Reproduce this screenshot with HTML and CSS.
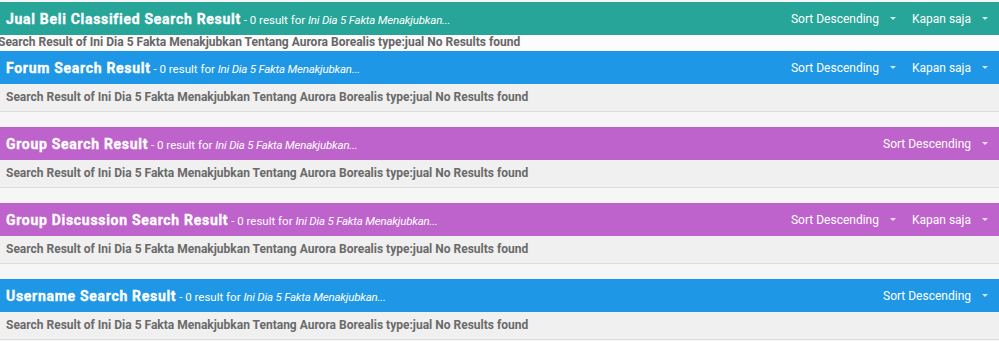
FILE: index.html
```html
<!doctype html>
<html lang="id">
  <head>
    <title>Search Result</title>
    <link rel="stylesheet" href="styles.css">
  </head>
  <body>

    <div class="section first">
      <div class="head teal">
        <div class="title"><b>Jual Beli Classified Search Result</b> - 0 result for <i>Ini Dia 5 Fakta Menakjubkan...</i></div>
        <div class="tools">
          <span class="drop">Sort Descending <span class="caret"></span></span>
          <span class="drop">Kapan saja <span class="caret"></span></span>
        </div>
      </div>
      <div class="strip">Search Result of Ini Dia 5 Fakta Menakjubkan Tentang Aurora Borealis type:jual No Results found</div>
    </div>

    <div class="section">
      <div class="head blue">
        <div class="title"><b>Forum Search Result</b> - 0 result for <i>Ini Dia 5 Fakta Menakjubkan...</i></div>
        <div class="tools">
          <span class="drop">Sort Descending <span class="caret"></span></span>
          <span class="drop">Kapan saja <span class="caret"></span></span>
        </div>
      </div>
      <div class="body">Search Result of Ini Dia 5 Fakta Menakjubkan Tentang Aurora Borealis type:jual No Results found</div>
    </div>

    <div class="section">
      <div class="head purple">
        <div class="title"><b>Group Search Result</b> - 0 result for <i>Ini Dia 5 Fakta Menakjubkan...</i></div>
        <div class="tools">
          <span class="drop">Sort Descending <span class="caret"></span></span>
        </div>
      </div>
      <div class="body">Search Result of Ini Dia 5 Fakta Menakjubkan Tentang Aurora Borealis type:jual No Results found</div>
    </div>

    <div class="section">
      <div class="head purple">
        <div class="title"><b>Group Discussion Search Result</b> - 0 result for <i>Ini Dia 5 Fakta Menakjubkan...</i></div>
        <div class="tools">
          <span class="drop">Sort Descending <span class="caret"></span></span>
          <span class="drop">Kapan saja <span class="caret"></span></span>
        </div>
      </div>
      <div class="body">Search Result of Ini Dia 5 Fakta Menakjubkan Tentang Aurora Borealis type:jual No Results found</div>
    </div>

    <div class="section">
      <div class="head blue">
        <div class="title"><b>Username Search Result</b> - 0 result for <i>Ini Dia 5 Fakta Menakjubkan...</i></div>
        <div class="tools">
          <span class="drop">Sort Descending <span class="caret"></span></span>
        </div>
      </div>
      <div class="body">Search Result of Ini Dia 5 Fakta Menakjubkan Tentang Aurora Borealis type:jual No Results found</div>
    </div>

  </body>
</html>
```

FILE: styles.css
```css
body {
  margin: 0;
  padding-top: 2px;
  background-color: #f6f6f6;
  font-family: Roboto, "Liberation Sans", sans-serif;
}

.section {
  margin-bottom: 15px;
}

.section.first {
  margin-bottom: 0;
}

.head {
  display: flex;
  align-items: center;
  justify-content: space-between;
  height: 33px;
  padding: 0 11px 0 6px;
  color: white;
}

.teal {
  background-color: #26a598;
}

.blue {
  background-color: #1e97e6;
}

.purple {
  background-color: #be63cc;
}

.title {
  font-size: 11.5px;
  white-space: nowrap;
}

.title b {
  font-size: 14px;
  font-weight: 700;
  letter-spacing: 0.7px;
  -webkit-text-stroke: 0.35px white;
}

.title i {
  letter-spacing: -0.2px;
}

.tools {
  display: flex;
  gap: 16px;
  font-size: 12px;
}

.drop {
  display: flex;
  align-items: center;
  gap: 11px;
}

.caret {
  width: 0;
  height: 0;
  border-left: 3px solid transparent;
  border-right: 3px solid transparent;
  border-top: 3px solid rgba(255, 255, 255, 0.8);
}

.strip {
  height: 16px;
  line-height: 15px;
  margin-left: -2px;
  background-color: #fcfcfc;
  color: #666;
  font-size: 12px;
  font-weight: 700;
  white-space: nowrap;
}

.body {
  height: 27px;
  line-height: 27px;
  padding-left: 6px;
  background-color: #f0f0f0;
  border-bottom: 1px solid #dcdcdc;
  color: #6a6a6a;
  font-size: 12px;
  font-weight: 700;
  white-space: nowrap;
}
```
